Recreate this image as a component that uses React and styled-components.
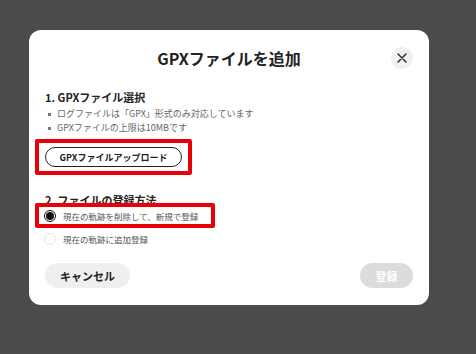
import React from "react";
import styled, { createGlobalStyle } from "styled-components";

const Global = createGlobalStyle`
  html, body { margin: 0; padding: 0; }
  body {
    background: #4b4b4b;
    width: 476px;
    height: 354px;
    overflow: hidden;
    font-family: "Noto Sans CJK JP", "Noto Sans", sans-serif;
  }
`;

const Page = styled.div`
  padding: 30px 0 0 29px;
`;

const Modal = styled.div`
  width: 400px;
  height: 275px;
  box-sizing: border-box;
  background: #fff;
  border-radius: 12px;
  padding: 14px 16px 17px;
  display: flex;
  flex-direction: column;
`;

const Header = styled.div`
  display: grid;
  grid-template-columns: 22px 1fr 22px;
  align-items: center;
  height: 28px;
`;

const Title = styled.h1`
  grid-column: 2;
  margin: 0;
  text-align: center;
  font-size: 16px;
  font-weight: 700;
  color: #222;
  line-height: 28px;
`;

const CloseButton = styled.button`
  grid-column: 3;
  width: 22px;
  height: 22px;
  border-radius: 50%;
  border: none;
  background: #f0f0f0;
  padding: 0;
  display: flex;
  align-items: center;
  justify-content: center;
`;

const Section = styled.div`
  margin-top: ${(p) => p.$mt}px;
  display: flex;
  flex-direction: column;
  align-items: flex-start;
`;

const Heading = styled.h2`
  margin: 0;
  font-size: 11px;
  line-height: 14px;
  font-weight: 700;
  color: #222;
`;

const List = styled.ul`
  margin: 3px 0 0;
  padding: 0 0 0 12px;
  list-style: none;
`;

const Item = styled.li`
  position: relative;
  font-size: 9px;
  line-height: 14px;
  color: #666;
  &::before {
    content: "";
    position: absolute;
    left: -9px;
    top: 6px;
    width: 3px;
    height: 3px;
    background: #777;
  }
`;

const Highlight = styled.div`
  position: relative;
  border: 4px solid #e8000b;
  border-radius: 2px;
  padding: ${(p) => p.$pad};
  margin: ${(p) => p.$margin};
  display: flex;
  align-items: center;
  box-sizing: border-box;
  width: ${(p) => p.$w || "auto"};
`;

const OutlineButton = styled.button`
  height: 20px;
  width: 137px;
  border: 1px solid #222;
  border-radius: 10px;
  background: #fff;
  font-family: inherit;
  font-size: 9px;
  font-weight: 700;
  color: #222;
  padding: 0;
`;

const RadioRow = styled.label`
  display: flex;
  align-items: center;
  gap: 7px;
  height: 17px;
  margin: ${(p) => p.$margin || "0"};
  font-size: 8.5px;
  color: #555;
`;

const RadioDot = styled.span`
  width: 12px;
  height: 12px;
  box-sizing: border-box;
  border-radius: 50%;
  border: 1px solid ${(p) => (p.$checked ? "#111" : "#e4e4e4")};
  background: #fff;
  display: flex;
  align-items: center;
  justify-content: center;
  &::after {
    content: "";
    width: 8px;
    height: 8px;
    border-radius: 50%;
    background: ${(p) => (p.$checked ? "#111" : "transparent")};
  }
`;

const Footer = styled.div`
  margin-top: auto;
  display: flex;
  justify-content: space-between;
`;

const PillButton = styled.button`
  height: 25px;
  width: ${(p) => p.$w}px;
  border: none;
  border-radius: 13px;
  background: ${(p) => p.$bg};
  color: ${(p) => p.$color};
  font-family: inherit;
  font-size: 11px;
  font-weight: 700;
  padding: 0;
`;

export default function App() {
  return (
    <>
      <Global />
      <Page>
        <Modal>
          <Header>
            <Title>GPXファイルを追加</Title>
            <CloseButton aria-label="close">
              <svg width="10" height="10" viewBox="0 0 10 10">
                <path d="M1 1L9 9M9 1L1 9" stroke="#222" strokeWidth="1.4" strokeLinecap="round" />
              </svg>
            </CloseButton>
          </Header>
          <Section $mt={18}>
            <Heading>1. GPXファイル選択</Heading>
            <List>
              <Item>ログファイルは「GPX」形式のみ対応しています</Item>
              <Item>GPXファイルの上限は10MBです</Item>
            </List>
            <Highlight $pad="4px 6px" $margin="4px 0 0 -10px">
              <OutlineButton>GPXファイルアップロード</OutlineButton>
            </Highlight>
          </Section>
          <Section $mt={18}>
            <Heading>2. ファイルの登録方法</Heading>
            <Highlight $pad="0 0 0 5px" $margin="-4px 0 0 -10px" $w="180px">
              <RadioRow>
                <RadioDot $checked />
                現在の軌跡を削除して、新規で登録
              </RadioRow>
            </Highlight>
            <RadioRow $margin="2px 0 0 -1px">
              <RadioDot />
              現在の軌跡に追加登録
            </RadioRow>
          </Section>
          <Footer>
            <PillButton $w={85} $bg="#efefef" $color="#222">キャンセル</PillButton>
            <PillButton $w={53} $bg="#dcdcdc" $color="#fff">登録</PillButton>
          </Footer>
        </Modal>
      </Page>
    </>
  );
}
